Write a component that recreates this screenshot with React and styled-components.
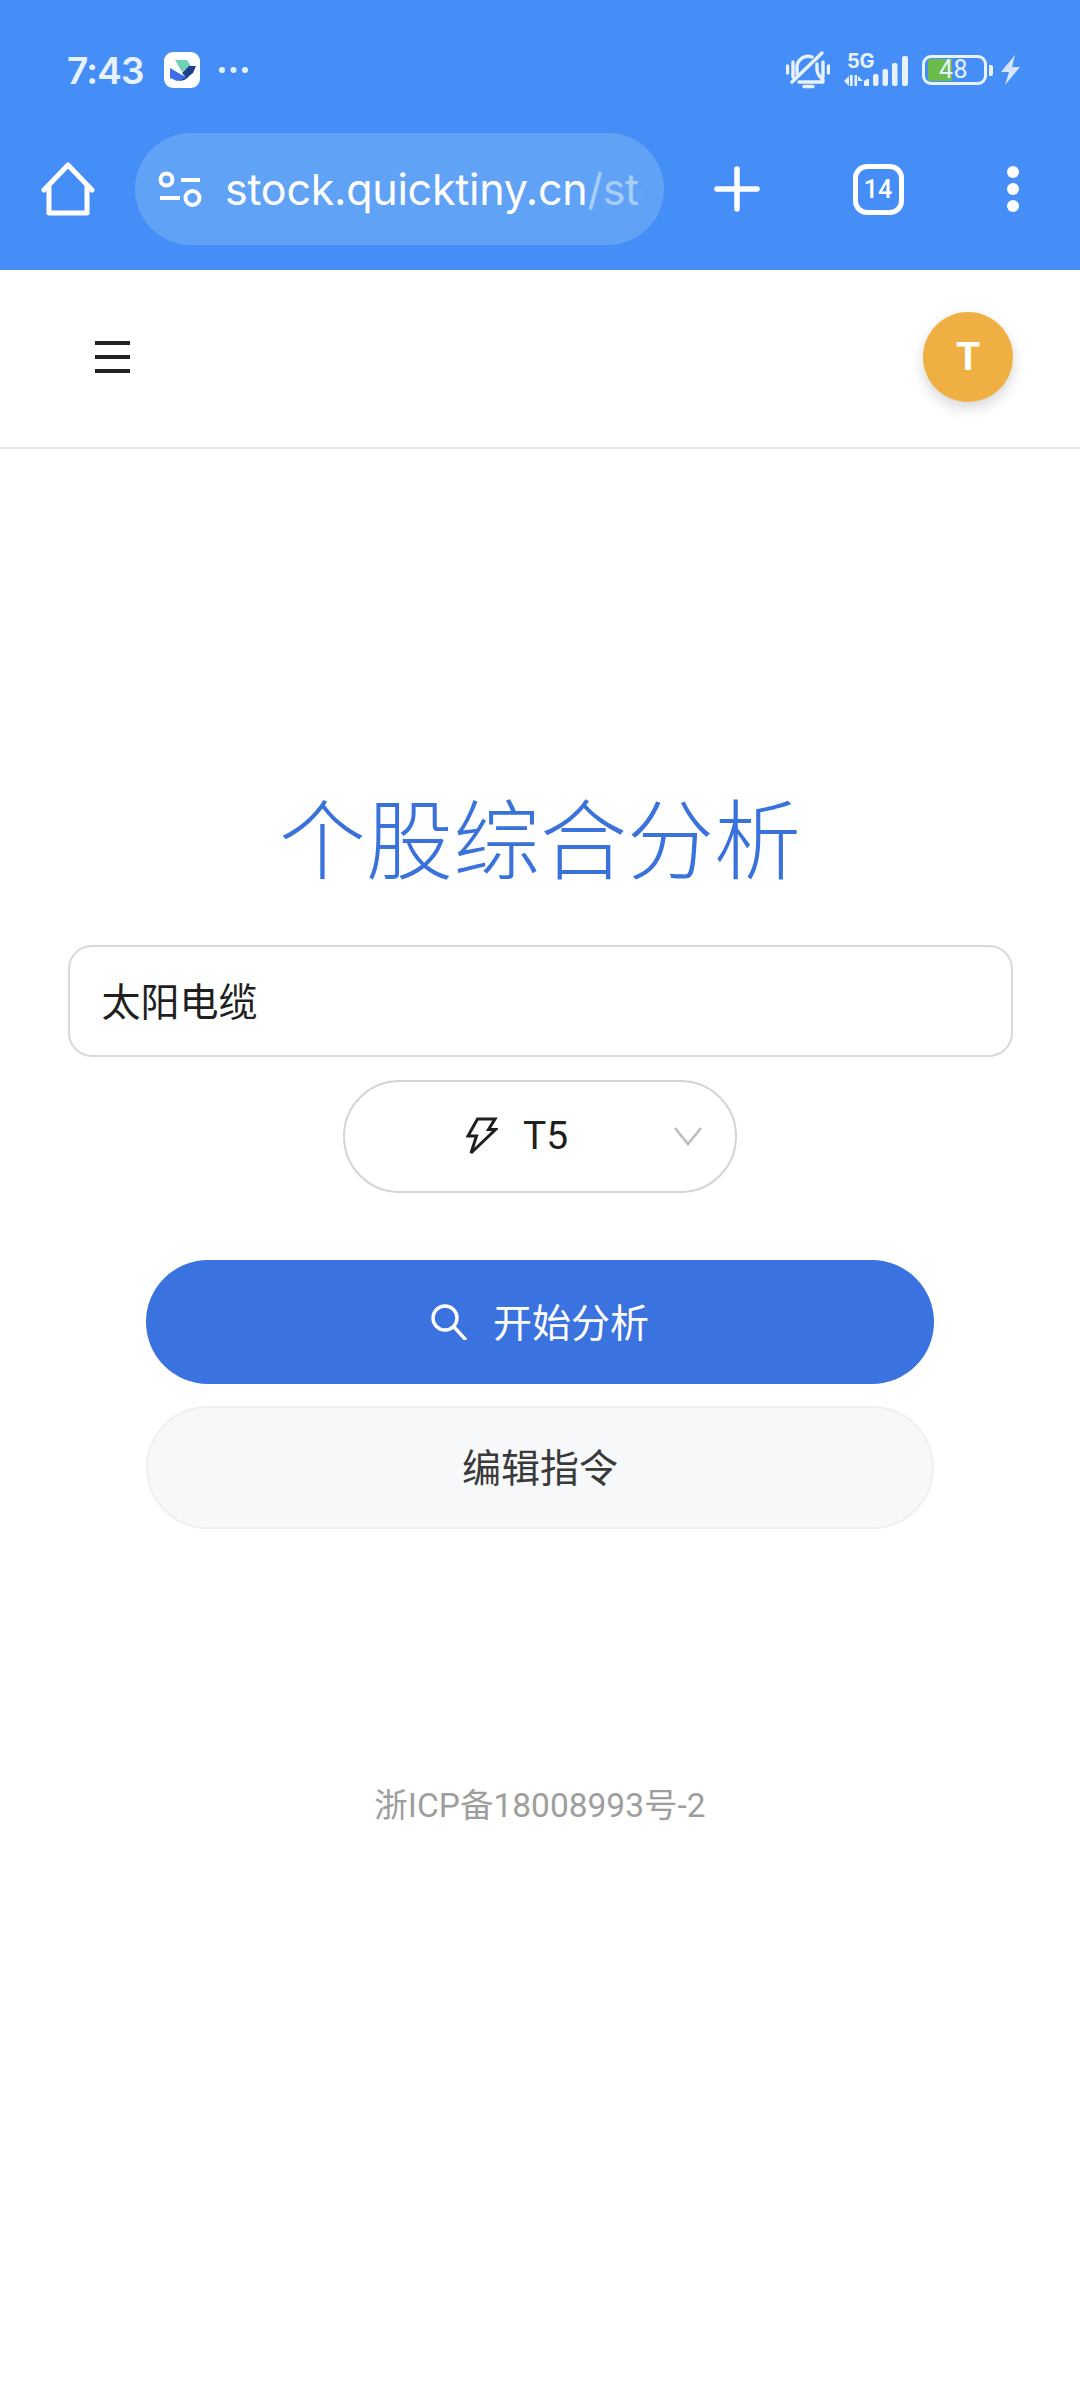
import React from 'react'
import styled, { createGlobalStyle } from 'styled-components'

const GlobalStyle = createGlobalStyle`
  html, body {
    margin: 0;
    padding: 0;
    background: #fff;
  }
  body {
    font-family: Roboto, "Noto Sans CJK SC", sans-serif;
  }
  * {
    box-sizing: border-box;
  }
`

const Page = styled.div`
  width: 1080px;
  min-height: 2400px;
  background: #fff;
`

const Header = styled.header`
  height: 270px;
  background: #458ef7;
`

const StatusBar = styled.div`
  height: 133px;
  padding: 7px 60px 0 67px;
  display: flex;
  align-items: center;
  color: #e8f2fe;
`

const Clock = styled.span`
  font-family: Inter, sans-serif;
  font-size: 37px;
  font-weight: 600;
  letter-spacing: -0.8px;
`

const AppBadge = styled.div`
  width: 36px;
  height: 36px;
  margin-left: 20px;
  border-radius: 9px;
  background: #fff;
  display: flex;
  align-items: center;
  justify-content: center;
`

const MoreDots = styled.svg`
  margin-left: 18px;
`

const StatusIcons = styled.div`
  margin-left: auto;
  display: flex;
  align-items: center;
`

const Signal = styled.div`
  position: relative;
  width: 64px;
  height: 32px;
  margin-left: 14px;
  display: flex;
  align-items: flex-end;
`

const FiveG = styled.span`
  position: absolute;
  left: 3px;
  top: -3px;
  font-family: Inter, sans-serif;
  font-size: 20px;
  line-height: 20px;
  font-weight: 700;
  letter-spacing: -0.4px;
`

const Battery = styled.div`
  position: relative;
  width: 65px;
  height: 30px;
  margin-left: 14px;
  border: 3.5px solid #e8f2fe;
  border-radius: 9px;
  display: flex;
  align-items: center;
`

const BatteryFill = styled.div`
  position: absolute;
  left: 3px;
  top: 1px;
  bottom: 1px;
  width: 24px;
  border-radius: 2px 0 0 2px;
  background: #6cbb49;
`

const BatteryText = styled.span`
  position: relative;
  margin-left: 14px;
  font-family: Roboto, sans-serif;
  font-size: 25px;
  line-height: 24px;
  letter-spacing: 0.5px;
`

const BatteryNub = styled.div`
  width: 4px;
  height: 11px;
  margin-left: 2px;
  border-radius: 0 2px 2px 0;
  background: #e8f2fe;
`

const BoltWrap = styled.svg`
  margin-left: 8px;
`

const Toolbar = styled.div`
  height: 137px;
  display: grid;
  grid-template-columns: 135px 529px 146px 136px 134px;
  align-items: start;
  justify-items: center;
`

const ToolSlot = styled.div`
  height: 112px;
  display: flex;
  align-items: center;
  justify-content: center;
`

const UrlPill = styled.div`
  width: 529px;
  height: 112px;
  padding: 0 23px;
  border-radius: 56px;
  background: #60a2f6;
  display: flex;
  align-items: center;
  color: #fff;
`

const UrlText = styled.div`
  width: 416px;
  margin-left: 23px;
  overflow: hidden;
  white-space: nowrap;
  font-family: Inter, sans-serif;
  font-size: 43px;
  font-weight: 400;
  letter-spacing: -0.25px;
`

const UrlPath = styled.span`
  color: #a9cdfb;
`

const TabBox = styled.div`
  width: 51px;
  height: 51px;
  border: 5px solid #fff;
  border-radius: 14px;
  display: flex;
  align-items: center;
  justify-content: center;
  color: #fff;
  font-family: Roboto, sans-serif;
  font-size: 25px;
  font-weight: 500;
`

const Nav = styled.nav`
  height: 179px;
  padding: 0 67px 4px 95px;
  border-bottom: 2px solid #e6e6ec;
  display: flex;
  align-items: center;
  justify-content: space-between;
`

const Burger = styled.div`
  width: 35px;
  display: flex;
  flex-direction: column;
  gap: 10px;
`

const BurgerLine = styled.span`
  display: block;
  height: 4px;
  background: #222;
`

const Avatar = styled.div`
  width: 90px;
  height: 90px;
  border-radius: 50%;
  background: #efaf42;
  box-shadow: 0 6px 14px rgba(0, 0, 0, 0.16);
  display: flex;
  align-items: center;
  justify-content: center;
  color: #fff;
  font-family: Roboto, sans-serif;
  font-size: 39px;
  font-weight: 700;
`

const Main = styled.main`
  display: flex;
  flex-direction: column;
  align-items: center;
`

const Title = styled.h1`
  margin: 336px 0 0;
  font-family: "Noto Sans CJK SC", sans-serif;
  font-size: 87px;
  line-height: 100px;
  font-weight: 300;
  color: #3a72dc;
`

const SearchField = styled.div`
  width: 945px;
  height: 112px;
  margin-top: 60px;
  padding: 0 32px 5px;
  border: 2px solid #d9d9d9;
  border-radius: 24px;
  display: flex;
  align-items: center;
  font-family: "Noto Sans CJK SC", sans-serif;
  font-size: 39px;
  color: #1f1f1f;
`

const ModelSelect = styled.div`
  width: 394px;
  height: 113px;
  margin-top: 23px;
  padding: 0 32px 2px 121px;
  border: 2px solid #d4d4d4;
  border-radius: 57px;
  display: flex;
  align-items: center;
  gap: 25px;
  font-family: Roboto, sans-serif;
  font-size: 39px;
  color: #1f1f1f;
`

const Chevron = styled.svg`
  margin-left: auto;
`

const ActionButton = styled.button`
  width: 788px;
  height: ${p => (p.$primary ? '124px' : '123px')};
  margin-top: ${p => (p.$primary ? '67px' : '22px')};
  padding: 0 0 5px;
  border: ${p => (p.$primary ? 'none' : '2px solid #f0f0f2')};
  border-radius: 62px;
  background: ${p => (p.$primary ? '#3a72df' : '#f7f8fa')};
  color: ${p => (p.$primary ? '#fff' : '#3a3a3a')};
  display: flex;
  align-items: center;
  justify-content: center;
  gap: 26px;
  font-family: "Noto Sans CJK SC", sans-serif;
  font-size: 39px;
  font-weight: 400;
`

const SearchIcon = styled.svg`
  margin-top: 5px;
`

const Footer = styled.footer`
  margin-top: 252px;
  font-family: Roboto, "Noto Sans CJK SC", sans-serif;
  font-size: 33.5px;
  line-height: 50px;
  color: #9e9e9e;
`

function AppLogo() {
  return (
    <svg width="36" height="36" viewBox="0 0 36 36">
      <path d="M11 8h12l4 6-9 6z" fill="#6fd0b4" />
      <path d="M6 16l12 7 7 2-5 3-7 1-7-3z" fill="#3f6fe8" />
      <path d="M18 21l7-7h7l-3 7-9 7-5 1 7-4z" fill="#1f3c8f" />
    </svg>
  )
}

function BellOff() {
  return (
    <svg width="44" height="38" viewBox="0 0 44 38" fill="none" stroke="#e8f2fe" strokeWidth="3.4" strokeLinecap="round" strokeLinejoin="round">
      <path d="M1.5 15v7M7 11v15M37 11v15M42.5 15v7" />
      <path d="M11 23v-7a11 11 0 0 1 15-10" />
      <path d="M31 13v6c0 4 3 7 6 10v2H13" />
      <path d="M6 31L36 2" />
      <path d="M18 35.5h9" />
    </svg>
  )
}

function SignalIcon() {
  return (
    <svg width="64" height="30" viewBox="0 0 64 30" fill="#e8f2fe">
      <path d="M0 25l5-5v10z" />
      <rect x="6" y="19" width="2.6" height="11" />
      <rect x="10.5" y="19" width="2.6" height="11" />
      <path d="M14 20l5 5h-5z" />
      <path d="M20 30v-5l3-2h2v7z" />
      <rect x="29" y="18" width="5.5" height="12" rx="2" />
      <rect x="38.5" y="13" width="5.5" height="17" rx="2" />
      <rect x="48" y="7" width="5.5" height="23" rx="2" />
      <rect x="58" y="0" width="6" height="30" rx="2" />
    </svg>
  )
}

function HomeIcon() {
  return (
    <svg width="54" height="55" viewBox="0 0 54 55" fill="none" stroke="#fff" strokeWidth="5" strokeLinecap="round" strokeLinejoin="round">
      <path d="M3 28L27 3l24 25" />
      <path d="M8 25v26h38V25" />
    </svg>
  )
}

function TuneIcon() {
  return (
    <svg width="44" height="36" viewBox="0 0 44 36" fill="none" stroke="#fff" strokeWidth="4">
      <circle cx="8.5" cy="8.5" r="6" />
      <path d="M23 9h19" />
      <path d="M2 27h20" />
      <circle cx="34.5" cy="27" r="7" />
    </svg>
  )
}

function App() {
  return (
    <Page>
      <GlobalStyle />
      <Header>
        <StatusBar>
          <Clock>7:43</Clock>
          <AppBadge>
            <AppLogo />
          </AppBadge>
          <MoreDots width="31" height="8" viewBox="0 0 31 8" fill="#e8f2fe">
            <circle cx="4" cy="4" r="3" />
            <circle cx="15.5" cy="4" r="3" />
            <circle cx="27" cy="4" r="3" />
          </MoreDots>
          <StatusIcons>
            <BellOff />
            <Signal>
              <FiveG>5G</FiveG>
              <SignalIcon />
            </Signal>
            <Battery>
              <BatteryFill />
              <BatteryText>48</BatteryText>
            </Battery>
            <BatteryNub />
            <BoltWrap width="19" height="30" viewBox="0 0 19 30" fill="#d5e5fc">
              <path d="M14 0L0 17h8L4 30l15-18h-8z" />
            </BoltWrap>
          </StatusIcons>
        </StatusBar>
        <Toolbar>
          <ToolSlot>
            <HomeIcon />
          </ToolSlot>
          <UrlPill>
            <TuneIcon />
            <UrlText>stock.quicktiny.cn<UrlPath>/stock</UrlPath></UrlText>
          </UrlPill>
          <ToolSlot>
            <svg width="46" height="46" viewBox="0 0 46 46" stroke="#fff" strokeWidth="5.5" strokeLinecap="round">
              <path d="M3 23h40M23 3v40" />
            </svg>
          </ToolSlot>
          <ToolSlot>
            <TabBox>14</TabBox>
          </ToolSlot>
          <ToolSlot>
            <svg width="12" height="46" viewBox="0 0 12 46" fill="#fff">
              <circle cx="6" cy="6" r="6" />
              <circle cx="6" cy="23" r="6" />
              <circle cx="6" cy="40" r="6" />
            </svg>
          </ToolSlot>
        </Toolbar>
      </Header>
      <Nav>
        <Burger>
          <BurgerLine />
          <BurgerLine />
          <BurgerLine />
        </Burger>
        <Avatar>T</Avatar>
      </Nav>
      <Main>
        <Title>个股综合分析</Title>
        <SearchField>太阳电缆</SearchField>
        <ModelSelect>
          <svg width="32" height="38" viewBox="0 0 32 38" fill="none" stroke="#1f1f1f" strokeWidth="3" strokeLinejoin="miter">
            <path d="M11.5 2H29l-6.500 10.500h7L5 36l5.500-17H2z" />
          </svg>
          <span>T5</span>
          <Chevron width="30" height="20" viewBox="0 0 30 20" fill="none" stroke="#bdbdbd" strokeWidth="2.6">
            <path d="M2 2l13 16L28 2" />
          </Chevron>
        </ModelSelect>
        <ActionButton $primary>
          <SearchIcon width="36" height="36" viewBox="0 0 36 36" fill="none" stroke="#fff" strokeWidth="3.4" strokeLinecap="round">
            <circle cx="14" cy="14" r="12" />
            <path d="M23 23l11 12" />
          </SearchIcon>
          <span>开始分析</span>
        </ActionButton>
        <ActionButton>编辑指令</ActionButton>
        <Footer>浙ICP备18008993号-2</Footer>
      </Main>
    </Page>
  )
}

export default App
